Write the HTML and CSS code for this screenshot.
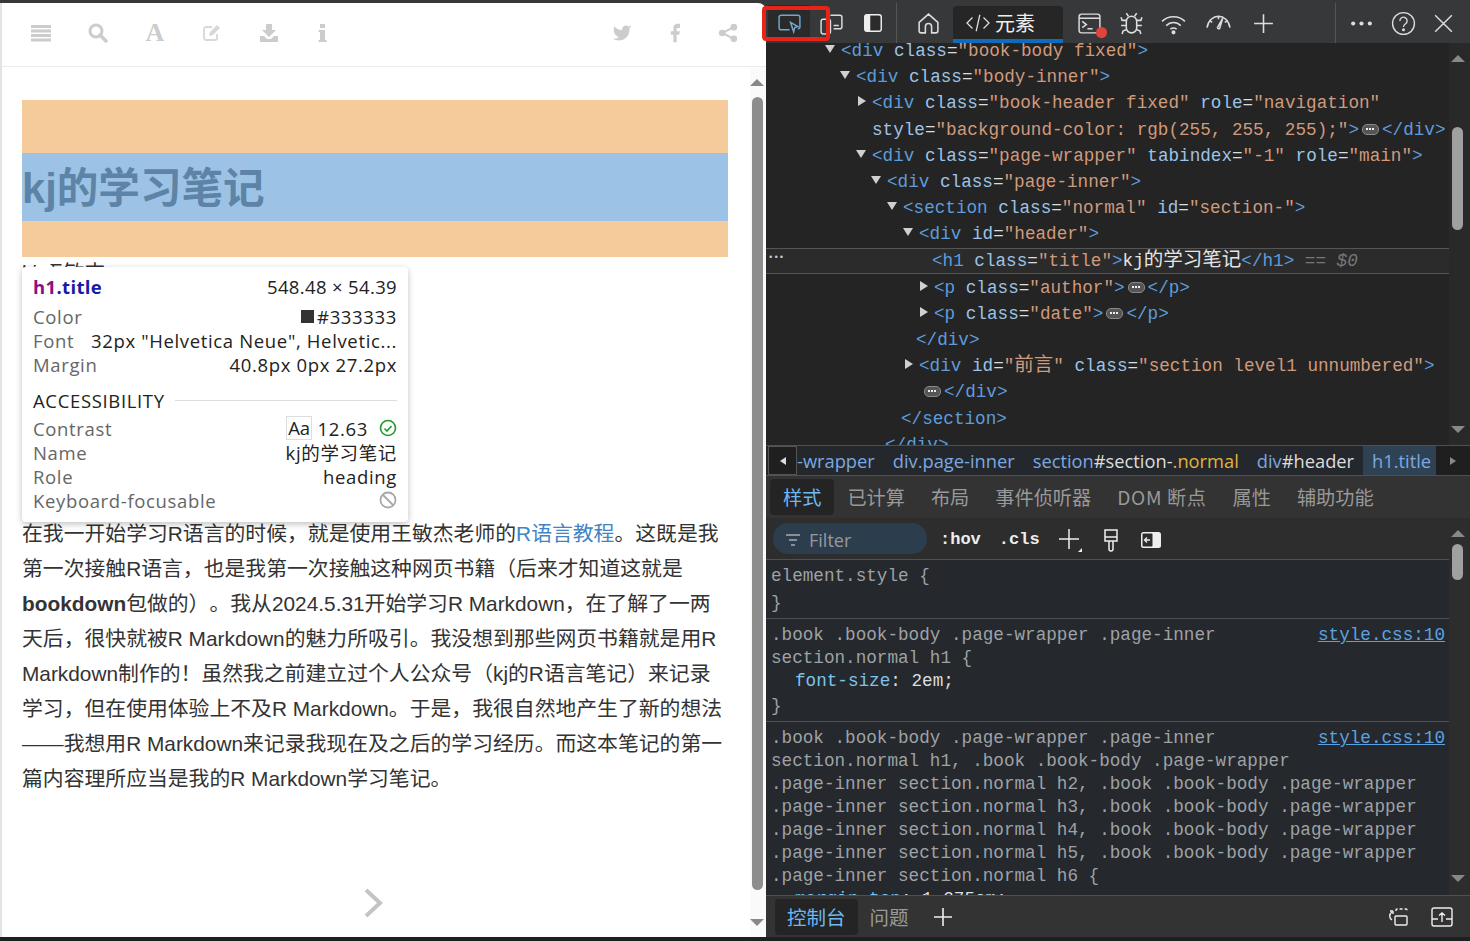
FILE: index.html
```html
<!DOCTYPE html>
<html lang="zh-CN">
<head>
    <meta charset="UTF-8">
    <meta name="viewport" content="width=device-width, initial-scale=1.0">
    <title>kj的学习笔记</title>
    <link rel="stylesheet" href="styles.css">
</head>
<body>
<div class="app">
    <!-- left: the page being inspected -->
    <main class="page">
        <header class="book-bar">
            <div class="bar-group">
                <svg class="bi" viewBox="0 0 20 20"><path d="M0 2h20v3H0zM0 6.500h20v3H0zM0 11h20v3H0zM0 15.500h20v3H0z"/></svg>
                <svg class="bi" viewBox="0 0 20 20"><circle cx="8" cy="8" r="6" fill="none" stroke="#ccc" stroke-width="3"/><path d="M12 12l6 6" stroke="#ccc" stroke-width="3.500" stroke-linecap="round"/></svg>
                <span class="bi-a">A</span>
                <svg class="bi" viewBox="0 0 20 20"><path d="M15 11v4a2 2 0 0 1-2 2H4a2 2 0 0 1-2-2V6a2 2 0 0 1 2-2h6" fill="none" stroke="#d8d8d8" stroke-width="1.800"/><path d="M7 13l1-4 7-7 3 3-7 7z" fill="#d8d8d8"/></svg>
                <svg class="bi" viewBox="0 0 20 20"><path d="M7 1h6v6h4l-7 7-7-7h4z"/><path d="M1 13h4l3 3h4l3-3h4v6H1z"/></svg>
                <svg class="bi bi-i" viewBox="0 0 20 20"><path d="M8 1h5v4H8zM6.500 7h6.500v10h1.500v2H6.500v-2H8V9H6.500z"/></svg>
            </div>
            <div class="bar-group right">
                <svg class="bi" viewBox="0 0 24 24"><path d="M23 3a10.900 10.900 0 0 1-3 1.460 4.480 4.480 0 0 0-7.860 3v1A10.660 10.660 0 0 1 3 4s-4 9 5 13a11.640 11.640 0 0 1-7 2c9 5 20 0 20-11.500a4.500 4.500 0 0 0-.08-.83A7.720 7.720 0 0 0 23 3z"/></svg>
                <svg class="bi" viewBox="0 0 24 24"><path d="M18 1h-3a5 5 0 0 0-5 5v4H7v4h3v9h4v-9h3l1-4h-4V7a1 1 0 0 1 1-1h3z"/></svg>
                <svg class="bi" viewBox="0 0 24 24"><circle cx="19" cy="5" r="4"/><circle cx="5" cy="12" r="4"/><circle cx="19" cy="19" r="4"/><path d="M19 5L5 12l14 7" fill="none" stroke="#ccc" stroke-width="2.500"/></svg>
            </div>
        </header>
        <div class="page-body">
            <article class="article">
                <div class="title-hl"><h1 class="title">kj的学习笔记</h1></div>
                <div class="meta">kj 王敏杰</div>
                <p class="intro">
                    在我一开始学习R语言的时候，就是使用王敏杰老师的<a href="#">R语言教程</a>。这既是我<br>
                    第一次接触R语言，也是我第一次接触这种网页书籍（后来才知道这就是<br>
                    <b>bookdown</b>包做的）。我从2024.5.31开始学习R Markdown，在了解了一两<br>
                    天后，很快就被R Markdown的魅力所吸引。我没想到那些网页书籍就是用R<br>
                    Markdown制作的！虽然我之前建立过个人公众号（kj的R语言笔记）来记录<br>
                    学习，但在使用体验上不及R Markdown。于是，我很自然地产生了新的想法<br>
                    ——我想用R Markdown来记录我现在及之后的学习经历。而这本笔记的第一<br>
                    篇内容理所应当是我的R Markdown学习笔记。
                </p>
                <svg class="next" viewBox="0 0 20 32"><path d="M3 3l14 13L3 29" fill="none" stroke="#c4c4c4" stroke-width="4"/></svg>
            </article>
            <div class="page-scroll">
                <i class="up"></i>
                <i class="thumb"></i>
                <i class="down"></i>
            </div>
        </div>

        <!-- hover tooltip of the inspector -->
        <div class="tip">
            <div class="tip-row head"><span><b class="tip-tag">h1</b><b class="tip-cls">.title</b></span><span>548.48 × 54.39</span></div>
            <div class="tip-row first"><span class="k">Color</span><span class="v"><i class="swatch"></i>#333333</span></div>
            <div class="tip-row"><span class="k">Font</span><span class="v">32px "Helvetica Neue", Helvetic...</span></div>
            <div class="tip-row"><span class="k">Margin</span><span class="v">40.8px 0px 27.2px</span></div>
            <div class="tip-sec"><span>ACCESSIBILITY</span><i></i></div>
            <div class="tip-row"><span class="k">Contrast</span><span class="v"><span class="aa">Aa</span> 12.63<svg class="tip-ok" viewBox="0 0 18 18"><circle cx="9" cy="9" r="7.500" fill="none" stroke="#1a9a2c" stroke-width="1.600"/><path d="M5.500 9.500l2.500 2.500 4.500-5" fill="none" stroke="#1a9a2c" stroke-width="1.600"/></svg></span></div>
            <div class="tip-row"><span class="k">Name</span><span class="v">kj的学习笔记</span></div>
            <div class="tip-row"><span class="k">Role</span><span class="v">heading</span></div>
            <div class="tip-row"><span class="k">Keyboard-focusable</span><svg class="tip-ok" viewBox="0 0 18 18"><circle cx="9" cy="9" r="7.500" fill="none" stroke="#a8a8a8" stroke-width="1.800"/><path d="M4 4l10 10" stroke="#a8a8a8" stroke-width="1.800"/></svg></div>
        </div>
        <i class="tip-arrow"></i>
    </main>

    <!-- right: devtools -->
    <section class="devtools">
        <nav class="tools">
            <button class="tb on"><svg viewBox="0 0 24 24" fill="none" stroke="#6fa8d0" stroke-width="1.400"><path d="M12 18H4a2 2 0 0 1-2-2V6a2 2 0 0 1 2-2h16a2 2 0 0 1 2 2v10a2 2 0 0 1-2 1"/><path d="M13 11l7 4-3 1-1 4z"/></svg></button>
            <button class="tb"><svg viewBox="0 0 24 24" fill="none" stroke="#ddd" stroke-width="1.400"><rect x="2" y="8" width="9" height="14" rx="2"/><path d="M11 4h9a2 2 0 0 1 2 2v9a2 2 0 0 1-2 2h-6M14 14h5"/></svg></button>
            <button class="tb dock"><svg viewBox="0 0 24 24"><rect x="3" y="3" width="18" height="18" rx="2.500" fill="#2b2b2b" stroke="#eee" stroke-width="1.600"/><path d="M5 3h4v18H5a2 2 0 0 1-2-2V5a2 2 0 0 1 2-2z" fill="#eee"/></svg></button>
            <i class="sep"></i>
            <button class="tb home"><svg viewBox="0 0 24 24" fill="none" stroke="#ddd" stroke-width="1.500"><path d="M3 11l9-8 9 8v8a2 2 0 0 1-2 2h-4v-6a3 3 0 0 0-6 0v6H5a2 2 0 0 1-2-2z"/></svg></button>
            <div class="tab-el"><svg viewBox="0 0 26 24" fill="none" stroke="#ddd" stroke-width="1.400"><path d="M7 6l-6 6 6 6M19 6l6 6-6 6M15 3l-4 18"/></svg><span>元素</span></div>
            <button class="tb con"><svg viewBox="0 0 24 24" fill="none" stroke="#ddd" stroke-width="1.400"><rect x="2" y="3" width="20" height="18" rx="2.500"/><path d="M2 7h20M5 10l4 3-4 3M10 17h5"/></svg><i class="err"></i></button>
            <button class="tb"><svg viewBox="0 0 24 24" fill="none" stroke="#ddd" stroke-width="1.500"><path d="M7 10a5 5 0 0 1 10 0v6a5 5 0 0 1-10 0z"/><path d="M9 5L7 2M15 5l2-3M7 9H3L2 6M17 9h4l1-3M7 14H2M17 14h5M7 18l-3 1-1 3M17 18l3 1 1 3"/></svg></button>
            <button class="tb"><svg viewBox="0 0 24 24" fill="none" stroke="#ddd" stroke-width="1.500"><path d="M1 10c6-6 16-6 22 0M5 14c4-4 10-4 14 0M9 17.500c2-1.500 4-1.500 6 0"/><circle cx="12" cy="20.500" r="1.200" fill="#ddd"/></svg></button>
            <button class="tb nudge"><svg viewBox="0 0 24 24" fill="none" stroke="#ddd" stroke-width="1.500"><path d="M1 16C2 9 7 5 12 5c5 0 10 4 11 11M3 9l3 2M12 5v3M21 9l-3 2"/><path d="M16 7l-5 9a1.500 1.500 0 0 0 2 1z"/></svg></button>
            <button class="tb nudge"><svg viewBox="0 0 24 24" fill="none" stroke="#ddd" stroke-width="1.500"><path d="M12 3v18M3 12h18"/></svg></button>
            <i class="sep far"></i>
            <button class="tb"><svg viewBox="0 0 24 24" fill="#ddd"><circle cx="4" cy="12" r="2"/><circle cx="12" cy="12" r="2"/><circle cx="20" cy="12" r="2"/></svg></button>
            <button class="tb"><svg viewBox="0 0 24 24" fill="none" stroke="#ddd" stroke-width="1.300"><circle cx="12" cy="12" r="10.500"/><path d="M8.500 9.500a3.500 3.500 0 1 1 5.500 2.800c-1.300.9-2 1.500-2 3"/><circle cx="12" cy="18" r=".8" fill="#ddd"/></svg></button>
            <button class="tb back"><svg viewBox="0 0 24 24" fill="none" stroke="#ddd" stroke-width="1.400"><path d="M4 4l16 16M20 4L4 20"/></svg></button>
        </nav>

        <div class="dom">
            <div class="tree">
                <div class="ln l1 open"><span class="t">&lt;div</span> <span class="n">class</span>=<span class="s">"book-body fixed"</span><span class="t">&gt;</span></div>
                <div class="ln l2 open"><span class="t">&lt;div</span> <span class="n">class</span>=<span class="s">"body-inner"</span><span class="t">&gt;</span></div>
                <div class="ln l3 shut"><span class="t">&lt;div</span> <span class="n">class</span>=<span class="s">"book-header fixed"</span> <span class="n">role</span>=<span class="s">"navigation"</span></div>
                <div class="ln l3"><span class="n">style</span>=<span class="s">"background-color: rgb(255, 255, 255);"</span><span class="t">&gt;</span><span class="more"></span><span class="t">&lt;/div&gt;</span></div>
                <div class="ln l3 open"><span class="t">&lt;div</span> <span class="n">class</span>=<span class="s">"page-wrapper"</span> <span class="n">tabindex</span>=<span class="s">"-1"</span> <span class="n">role</span>=<span class="s">"main"</span><span class="t">&gt;</span></div>
                <div class="ln l4 open"><span class="t">&lt;div</span> <span class="n">class</span>=<span class="s">"page-inner"</span><span class="t">&gt;</span></div>
                <div class="ln l5 open"><span class="t">&lt;section</span> <span class="n">class</span>=<span class="s">"normal"</span> <span class="n">id</span>=<span class="s">"section-"</span><span class="t">&gt;</span></div>
                <div class="ln l6 open"><span class="t">&lt;div</span> <span class="n">id</span>=<span class="s">"header"</span><span class="t">&gt;</span></div>
                <div class="ln l7 sel"><span class="t">&lt;h1</span> <span class="n">class</span>=<span class="s">"title"</span><span class="t">&gt;</span><span class="w">kj<span class="cjk">的学习笔记</span></span><span class="t">&lt;/h1&gt;</span> <em class="dollar">== $0</em><span class="dots">•••</span></div>
                <div class="ln l8 shut"><span class="t">&lt;p</span> <span class="n">class</span>=<span class="s">"author"</span><span class="t">&gt;</span><span class="more"></span><span class="t">&lt;/p&gt;</span></div>
                <div class="ln l8 shut"><span class="t">&lt;p</span> <span class="n">class</span>=<span class="s">"date"</span><span class="t">&gt;</span><span class="more"></span><span class="t">&lt;/p&gt;</span></div>
                <div class="ln l9"><span class="t">&lt;/div&gt;</span></div>
                <div class="ln l6 shut"><span class="t">&lt;div</span> <span class="n">id</span>=<span class="s">"<span class="cjk">前言</span>"</span> <span class="n">class</span>=<span class="s">"section level1 unnumbered"</span><span class="t">&gt;</span></div>
                <div class="ln l10"><span class="more"></span><span class="t">&lt;/div&gt;</span></div>
                <div class="ln l11"><span class="t">&lt;/section&gt;</span></div>
                <div class="ln l12"><span class="t">&lt;/div&gt;</span></div>
            </div>
            <div class="vscroll">
                <i class="up"></i>
                <i class="thumb dom-thumb"></i>
                <i class="down"></i>
            </div>
        </div>

        <div class="crumbs">
            <span class="cr-btn"><i class="arr-l"></i></span>
            <div class="cr-list">
                <span class="cr-item"><span class="c-b">-wrapper</span></span>
                <span class="cr-item"><span class="c-b">div.page-inner</span></span>
                <span class="cr-item"><span class="c-b">section</span><span class="c-w">#section-</span><span class="c-y">.normal</span></span>
                <span class="cr-item"><span class="c-b">div</span><span class="c-w">#header</span></span>
                <span class="cr-item cur"><span class="c-b">h1.title</span></span>
            </div>
            <span class="cr-btn right"><i class="arr-r"></i></span>
        </div>

        <div class="side-tabs">
            <span class="st on">样式</span>
            <span class="st">已计算</span>
            <span class="st">布局</span>
            <span class="st">事件侦听器</span>
            <span class="st wide">DOM 断点</span>
            <span class="st">属性</span>
            <span class="st">辅助功能</span>
        </div>

        <div class="styles">
            <div class="styles-main">
                <div class="filter-bar">
                    <div class="filter"><svg viewBox="0 0 16 16" fill="none" stroke="#aaa" stroke-width="1.600"><path d="M1 3h14M4 8h8M6 13h4"/></svg><span>Filter</span></div>
                    <b class="fb-txt">:hov</b>
                    <b class="fb-txt cls">.cls</b>
                    <svg class="fb-plus" viewBox="0 0 26 26" fill="none" stroke="#eee" stroke-width="1.500"><path d="M12 2v20M2 12h20"/><path d="M25 21v4h-4z" fill="#eee" stroke="none"/></svg>
                    <svg class="fb-ic" viewBox="0 0 20 24" fill="none" stroke="#eee" stroke-width="1.500"><path d="M4 2h12v11H4zM4 9h12M8 13v8a2 2 0 0 0 4 0v-8"/></svg>
                    <svg class="fb-ic" viewBox="0 0 24 24"><rect x="2" y="4" width="20" height="16" rx="2.500" fill="#eee"/><rect x="3.500" y="5.500" width="10" height="13" rx="1" fill="#2d2d2d"/><path d="M11 12H6M8 9.500L5.500 12 8 14.500" fill="none" stroke="#eee" stroke-width="1.300"/></svg>
                </div>
                <div class="rules">
                    <div class="rule empty">
                        <div class="sel-line">element.style {</div>
                        <div class="brace">}</div>
                    </div>
                    <div class="rule">
                        <a class="src" href="#">style.css:10</a>
                        <div class="sel-line">.book .book-body .page-wrapper .page-inner</div>
                        <div class="sel-line">section.normal h1 {</div>
                        <div class="decl"><span class="pn">font-size</span>: 2em;</div>
                        <div class="brace">}</div>
                    </div>
                    <div class="rule">
                        <a class="src" href="#">style.css:10</a>
                        <div class="sel-line">.book .book-body .page-wrapper .page-inner</div>
                        <div class="sel-line">section.normal h1, .book .book-body .page-wrapper</div>
                        <div class="sel-line">.page-inner section.normal h2, .book .book-body .page-wrapper</div>
                        <div class="sel-line">.page-inner section.normal h3, .book .book-body .page-wrapper</div>
                        <div class="sel-line">.page-inner section.normal h4, .book .book-body .page-wrapper</div>
                        <div class="sel-line">.page-inner section.normal h5, .book .book-body .page-wrapper</div>
                        <div class="sel-line">.page-inner section.normal h6 {</div>
                        <div class="decl"><span class="pn">margin-top</span>: 1.275em;</div>
                    </div>
                </div>
            </div>
            <div class="vscroll wide">
                <i class="up"></i>
                <i class="thumb st-thumb"></i>
                <i class="down"></i>
            </div>
        </div>

        <footer class="drawer">
            <span class="dr-tab on">控制台</span>
            <span class="dr-tab">问题</span>
            <svg class="dr-plus" viewBox="0 0 20 20" fill="none" stroke="#eee" stroke-width="1.600"><path d="M10 1v18M1 10h18"/></svg>
            <span class="spacer"></span>
            <svg class="dr-ic gap" viewBox="0 0 24 24" fill="none" stroke="#eee" stroke-width="1.400"><rect x="9" y="11" width="12" height="9" rx="1"/><path d="M10 6V5a1 1 0 0 1 1-1h9a1 1 0 0 1 1 1v2" stroke-dasharray="3 2"/><path d="M6 7c-3 2-3 6 0 8M7 6L4 6M7 6v3"/></svg>
            <svg class="dr-ic" viewBox="0 0 24 24" fill="none" stroke="#eee" stroke-width="1.400"><rect x="2" y="3" width="20" height="18" rx="2"/><path d="M2 14h6M16 14h6M12 17V8M9 10.500L12 8l3 2.500"/></svg>
        </footer>
    </section>

    <!-- red annotation over the toolbar -->
    <div class="mark"></div>
</div>
</body>
</html>
```

FILE: styles.css
```css
* {
    box-sizing: border-box;
}

html, body {
    margin: 0;
    height: 100%;
    overflow: hidden;
}

body {
    background: #333;
}

.app {
    position: relative;
    display: flex;
    width: 1470px;
    height: 941px;
    padding-top: 3px;
    padding-bottom: 4px;
    background: linear-gradient(#36383a 0, #36383a 900px, #1e1f20 900px);
}

/* ---------- left page ---------- */
.page {
    position: relative;
    display: flex;
    flex-direction: column;
    width: 766px;
    background: #fff;
    border-left: 2px solid #e4e4e4;
    border-top-right-radius: 8px;
    font-family: "Liberation Sans", "Noto Sans CJK SC", sans-serif;
    color: #333;
}

.book-bar {
    display: flex;
    justify-content: space-between;
    height: 64px;
    padding: 0 28px 4px 29px;
    border-bottom: 1px solid #ececec;
}

.bar-group {
    display: flex;
    align-items: center;
    gap: 37px;
}

.bar-group.right {
    gap: 33px;
}

.bi {
    width: 20px;
    height: 20px;
    fill: #ccc;
}

.bi-i {
    margin-left: -4px;
}

.bi-a {
    width: 20px;
    font-family: "Liberation Serif", serif;
    font-weight: bold;
    font-size: 26px;
    line-height: 20px;
    color: #ccc;
    text-align: center;
}

.page-body {
    display: flex;
    flex: 1;
    min-height: 0;
}

.article {
    position: relative;
    flex: 1;
    padding: 33px 22px 0 20px;
}

.title-hl {
    height: 157px;
    padding-top: 53px;
    background: #f6cb9b;
}

.title {
    height: 68px;
    margin: 0;
    background: #9cc3e6;
    color: #5d84a6;
    font-size: 41.6px;
    line-height: 71px;
    font-weight: bold;
}

.meta {
    height: 259px;
    padding-top: 4px;
    font-size: 20.8px;
    line-height: 24px;
    overflow: hidden;
}

.intro {
    margin: 0;
    font-size: 20.84px;
    line-height: 35px;
    white-space: nowrap;
    text-spacing-trim: space-all;
}

.intro a {
    color: #4183c4;
    text-decoration: none;
}

.next {
    position: absolute;
    left: 361px;
    top: 820px;
    width: 20px;
    height: 32px;
}

.page-scroll {
    display: flex;
    flex-direction: column;
    align-items: center;
    width: 16px;
    padding: 12px 2px 0 0;
    background: #fafafa;
}

.page-scroll .up,
.vscroll .up {
    width: 0;
    height: 0;
    border-left: 7px solid transparent;
    border-right: 7px solid transparent;
    border-bottom: 7px solid #888;
}

.page-scroll .down,
.vscroll .down {
    width: 0;
    height: 0;
    margin-top: auto;
    border-left: 7px solid transparent;
    border-right: 7px solid transparent;
    border-top: 7px solid #888;
}

.page-scroll .thumb {
    width: 11px;
    height: 793px;
    margin-top: 11px;
    border-radius: 6px;
    background: #8d8d8d;
}

.page-scroll .down {
    margin-bottom: 11px;
}

/* ---------- tooltip ---------- */
.tip {
    position: absolute;
    left: 20px;
    top: 264px;
    width: 386px;
    height: 255px;
    padding: 7px 11px 0;
    background: #fff;
    border-radius: 4px;
    box-shadow: 0 2px 6px rgba(0, 0, 0, .25);
    font-family: "Open Sans", "Noto Sans CJK SC", sans-serif;
    font-size: 18.5px;
    letter-spacing: .65px;
    color: #222;
}

.tip-arrow {
    position: absolute;
    left: 33px;
    top: 255px;
    width: 0;
    height: 0;
    border-left: 9px solid transparent;
    border-right: 9px solid transparent;
    border-bottom: 9px solid #fff;
}

.tip-row {
    display: flex;
    justify-content: space-between;
    align-items: center;
    height: 24px;
    white-space: nowrap;
}

.tip-row.head {
    letter-spacing: .35px;
}

.tip-row.first {
    margin-top: 6px;
}

.tip-tag {
    color: #881280;
}

.tip-cls {
    color: #1a1aa6;
}

.k {
    color: #666;
}

.v {
    display: flex;
    align-items: center;
    white-space: pre;
}

.swatch {
    width: 13px;
    height: 13px;
    margin-right: 3px;
    background: #333;
}

.tip-sec {
    display: flex;
    align-items: center;
    gap: 10px;
    height: 24px;
    margin: 12px 0 4px;
}

.tip-sec i {
    flex: 1;
    height: 1px;
    background: #ddd;
}

.aa {
    padding: 0 1px;
    border: 1px solid #ddd;
    line-height: 22px;
    letter-spacing: 0;
}

.tip-ok {
    width: 18px;
    height: 18px;
    margin-left: 11px;
}

/* ---------- devtools ---------- */
.devtools {
    display: flex;
    flex-direction: column;
    width: 704px;
    background: #333;
    color: #ccc;
}

.tools {
    display: flex;
    align-items: center;
    height: 40px;
    padding-left: 2px;
    background: #36383a;
}

.tb {
    position: relative;
    display: flex;
    align-items: center;
    justify-content: center;
    flex: none;
    width: 42px;
    height: 36px;
    padding: 0;
    border: 0;
    background: none;
}

.tb svg {
    width: 25px;
    height: 25px;
}

.tb.dock svg {
    width: 22px;
    height: 22px;
}

.tb.on {
    background: #2a2a2a;
}

.tb.nudge {
    margin-left: 3px;
}

.tb.back {
    margin-left: -2px;
}

.sep {
    flex: none;
    width: 1px;
    height: 40px;
    margin: 0 10px 0 2px;
    background: #555;
}

.sep.far {
    margin: 0 4px 0 51px;
}

.tab-el {
    display: flex;
    align-items: center;
    gap: 5px;
    flex: none;
    align-self: flex-end;
    width: 110px;
    height: 37px;
    margin: 0 5px 0 4px;
    padding-left: 13px;
    background: #262626;
    border-bottom: 4px solid #0f6cbd;
    border-radius: 4px 4px 0 0;
    font: 20px "Noto Sans CJK SC", sans-serif;
    color: #eee;
}

.tab-el svg {
    width: 24px;
    height: 22px;
}

.err {
    position: absolute;
    right: 3px;
    bottom: 3px;
    width: 11px;
    height: 11px;
    border-radius: 50%;
    background: #e0453c;
}

.dom {
    display: flex;
    height: 402px;
    background: #242424;
}

.tree {
    flex: 1;
    margin-top: -5px;
    overflow: hidden;
    font: 17.650px/26.200px "Liberation Mono", "Noto Sans CJK SC", monospace;
    color: #ddd;
}

.ln {
    position: relative;
    height: 26.200px;
    white-space: pre;
}

.cjk {
    font-size: 19.500px;
    line-height: 1;
}

.l1 { padding-left: 75px; }
.l2 { padding-left: 90px; }
.l3 { padding-left: 106px; }
.l4 { padding-left: 121px; }
.l5 { padding-left: 137px; }
.l6 { padding-left: 153px; }
.l7 { padding-left: 166px; }
.l8 { padding-left: 168px; }
.l9 { padding-left: 150px; }
.l10 { padding-left: 155px; }
.l11 { padding-left: 135px; }
.l12 { padding-left: 119px; }

.open::before,
.shut::before {
    content: "";
    position: absolute;
    top: 6px;
}

.open::before {
    width: 0;
    height: 0;
    margin-left: -16px;
    margin-top: 1px;
    border-left: 5px solid transparent;
    border-right: 5px solid transparent;
    border-top: 8px solid #d0d0d0;
}

.shut::before {
    width: 0;
    height: 0;
    margin-left: -14px;
    border-top: 5px solid transparent;
    border-bottom: 5px solid transparent;
    border-left: 8px solid #d0d0d0;
}

.t { color: #5e9cdc; }
.n { color: #9cc3e6; }
.s { color: #d19a7c; }
.w { color: #e4e4e4; }

.sel {
    margin-bottom: 1px;
    background: #2b2b2b;
    border-top: 1px solid #555;
    border-bottom: 1px solid #555;
    line-height: 24.200px;
}

.dollar {
    color: #777;
}

.dots {
    position: absolute;
    left: 2px;
    top: -3px;
    font-size: 9px;
    color: #ccc;
}

.more {
    position: relative;
    display: inline-block;
    width: 17px;
    height: 11px;
    margin: 0 3px;
    background: #555;
    border: 1px solid #8a8a8a;
    border-radius: 5px;
}

.more::after {
    content: "";
    position: absolute;
    left: 3px;
    top: 3px;
    width: 8px;
    height: 2px;
    background: repeating-linear-gradient(90deg, #eee 0 2px, transparent 2px 3px);
}

.vscroll {
    display: flex;
    flex-direction: column;
    align-items: center;
    flex: none;
    width: 21px;
    padding: 12px 4px 12px 0;
    background: #292929;
}

.vscroll .thumb {
    flex: none;
    width: 11px;
    border-radius: 6px;
    background: #a0a0a0;
}

.dom-thumb {
    height: 103px;
    margin-top: 65px;
}

.st-thumb {
    height: 36px;
    margin-top: 7px;
}

.vscroll.wide {
    padding: 12px 4px 13px 0;
    background: #2d2d2d;
}

.crumbs {
    display: flex;
    height: 31px;
    background: #24272b;
    border-top: 1px solid #4a5158;
    border-bottom: 1px solid #4a5158;
    font: 18.300px/29px "Open Sans", sans-serif;
}

.cr-btn {
    display: flex;
    align-items: center;
    justify-content: center;
    flex: none;
    width: 29px;
    margin-left: 2px;
    border: 1px solid #555;
    background: #1f1f1f;
}

.cr-btn.right {
    width: 34px;
    margin-left: 0;
    border: 0;
}

.arr-l,
.arr-r {
    width: 0;
    height: 0;
    border-top: 4px solid transparent;
    border-bottom: 4px solid transparent;
}

.arr-l { border-right: 6px solid #ddd; }
.arr-r { border-left: 6px solid #888; }

.cr-list {
    display: flex;
    flex: 1;
    gap: 18px;
    overflow: hidden;
    white-space: nowrap;
}

.cr-item.cur {
    margin-left: -9px;
    padding: 0 9px;
    background: #2f4254;
}

.c-b { color: #7ca8e0; }
.c-w { color: #ddd; }
.c-y { color: #e3b341; }

.side-tabs {
    display: flex;
    align-items: center;
    height: 42px;
    padding-left: 4px;
    background: #333;
    font: 19.200px "Noto Sans CJK SC", sans-serif;
    color: #999;
}

.st {
    padding: 0 13px;
    line-height: 36px;
}

.st.wide {
    letter-spacing: .6px;
}

.st.on {
    color: #6db8f2;
    background: #242424;
    border-radius: 4px;
}

.styles {
    display: flex;
    height: 377px;
    min-height: 0;
}

.styles-main {
    display: flex;
    flex: 1;
    flex-direction: column;
    min-width: 0;
}

.filter-bar {
    display: flex;
    align-items: center;
    flex: none;
    height: 42px;
    padding: 2px 0 0 7px;
    background: #2d2d2d;
    border-bottom: 1px solid #4a5158;
}

.filter {
    display: flex;
    align-items: center;
    gap: 8px;
    width: 154px;
    height: 31px;
    margin-top: -2px;
    padding: 3px 0 0 12px;
    border-radius: 15px;
    background: #2c3e4e;
    font: 18px "Open Sans", sans-serif;
    color: #999;
}

.filter svg {
    width: 16px;
    height: 16px;
}

.fb-txt {
    margin-left: 13px;
    font: bold 17px "Liberation Mono", monospace;
    color: #eee;
}

.fb-txt.cls {
    margin-left: 18px;
}

.fb-plus {
    width: 26px;
    height: 26px;
    margin-left: 17px;
}

.fb-ic {
    width: 24px;
    height: 24px;
    margin-left: 16px;
}

.rules {
    flex: 1;
    overflow: hidden;
    background: #25282c;
    font: 17.650px/23px "Liberation Mono", monospace;
    color: #9ea2a6;
}

.rule {
    position: relative;
    padding: 5px 4px 3px 5px;
    border-bottom: 1px solid #4a5158;
}

.rule.empty {
    height: 59px;
}

.sel-line,
.decl {
    white-space: pre;
}

.brace {
    margin-top: 2px;
}

.rule.empty .brace {
    margin-top: 4px;
}

.decl {
    padding-left: 24px;
    color: #ddd;
}

.pn {
    color: #7ec3ea;
}

.src {
    float: right;
    color: #5aa2e0;
    text-decoration: underline;
}

.drawer {
    display: flex;
    align-items: center;
    height: 42px;
    padding-left: 9px;
    background: #333;
    font: 19.500px "Noto Sans CJK SC", sans-serif;
    color: #999;
    border-top: 1px solid #4a5158;
}

.dr-tab {
    padding: 0 12px;
    line-height: 36px;
}

.dr-tab.on {
    color: #6db8f2;
    background: #242424;
    border-radius: 4px;
}

.dr-plus {
    width: 20px;
    height: 20px;
    margin-left: 12px;
}

.spacer {
    flex: 1;
}

.dr-ic {
    width: 24px;
    height: 24px;
    margin-right: 16px;
}

.dr-ic.gap {
    margin-right: 20px;
}

/* ---------- annotation ---------- */
.mark {
    position: absolute;
    left: 762px;
    top: 6px;
    width: 68px;
    height: 35px;
    border: 4px solid #e8231a;
    border-radius: 4px;
}
```
